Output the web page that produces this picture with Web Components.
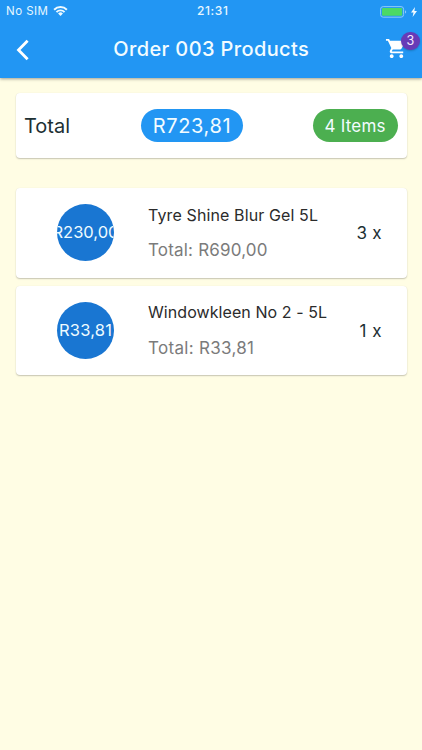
<!DOCTYPE html>
<html lang="en">
<head>
<meta charset="utf-8">
<title>Order 003 Products</title>
<style>
html, body { margin: 0; height: 100%; background: #fffde4; overflow: hidden; }
body { font-family: Inter, "Liberation Sans", sans-serif; }
</style>
</head>
<body>
<order-screen></order-screen>
<script>
class BaseElement extends HTMLElement {
  constructor() {
    super();
    this.attachShadow({ mode: 'open' }).innerHTML = this.render();
  }
  render() { return ''; }
}

/* A single line of text tracked out to a given width. */
class TrackedText extends BaseElement {
  render() {
    return `<style>
      :host { display: block; white-space: pre; flex: none; line-height: 1.2; }
      span { display: inline-block; }
    </style><span></span>`;
  }
  connectedCallback() {
    const span = this.shadowRoot.querySelector('span');
    const text = this.getAttribute('text');
    const width = parseFloat(this.getAttribute('width'));
    span.textContent = text;
    const natural = span.getBoundingClientRect().width;
    span.style.letterSpacing = (width - natural) / (text.length - 1) + 'px';
    this.style.width = width + 'px';
  }
}
customElements.define('tracked-text', TrackedText);

class StatusBar extends BaseElement {
  render() {
    return `<style>
      :host { display: grid; grid-template-columns: 1fr auto 1fr; align-items: center; height: 23px; box-sizing: border-box; padding: 1px 5px 0 6px; color: #e6f6ff; font-size: 11.5px; }
      .left, .right { display: flex; align-items: center; }
      .left { gap: 5px; }
      .left svg { margin-top: -2px; }
      .right { justify-content: flex-end; gap: 4px; margin-top: -1px; }
      .time { font-weight: 500; font-size: 12px; margin: -1px 0 0 2px; }
      svg { display: block; }
    </style>
    <div class="left"><tracked-text text="No SIM" width="42"></tracked-text>
      <svg width="15" height="11.5" viewBox="0 0 16 12" fill="none" stroke="#eefaff" stroke-width="2.1"><path d="M1.2 4.9a9.6 9.6 0 0 1 13.6 0M3.7 7.4a6 6 0 0 1 8.6 0"/><path d="M8 11.6 5.4 9a3.6 3.6 0 0 1 5.2 0z" fill="#eefaff" stroke="none"/></svg>
    </div>
    <tracked-text class="time" text="21:31" width="31"></tracked-text>
    <div class="right">
      <svg width="27" height="12" viewBox="0 0 27 12"><rect x=".6" y=".6" width="23" height="10.6" rx="2.6" fill="none" stroke="#8dcafa"/><rect x="2" y="2" width="20.2" height="7.8" rx="1" fill="#4cd964"/><path d="M25 4.2q1.2.5 1.2 1.7T25 7.6z" fill="#8dcafa"/></svg>
      <svg width="6" height="10" viewBox="0 0 6 10"><path d="M4 0 0 5.6h2.5L1.6 10 6 4H3.4z" fill="#f3fbff"/></svg>
    </div>`;
  }
}
customElements.define('status-bar', StatusBar);

class CartButton extends BaseElement {
  render() {
    return `<style>
      :host { display: block; position: relative; width: 25px; height: 24px; }
      svg { display: block; }
      .badge { position: absolute; left: 16px; top: -5.5px; width: 18.5px; height: 18.5px; border-radius: 50%; background: #673ab7; color: #f5eaff; font-size: 12.5px; display: flex; align-items: center; justify-content: center; line-height: 1; box-shadow: 0 1px 2px rgba(0,0,0,.2); }
    </style>
    <svg width="23" height="23" viewBox="0 0 24 24" fill="#fff"><path d="M7 18c-1.1 0-1.99.9-1.99 2S5.9 22 7 22s2-.9 2-2-.9-2-2-2zM1 2v2h2l3.6 7.59-1.35 2.45c-.16.28-.25.61-.25.96 0 1.1.9 2 2 2h12v-2H7.42c-.14 0-.25-.11-.25-.25l.03-.12.9-1.63h7.45c.75 0 1.41-.41 1.75-1.03l3.58-6.49A1 1 0 0 0 20.01 4H5.21l-.94-2H1zm16 16c-1.1 0-1.99.9-1.99 2s.89 2 1.99 2 2-.9 2-2-.9-2-2-2z"/></svg>
    <div class="badge"><slot></slot></div>`;
  }
}
customElements.define('cart-button', CartButton);

class AppBar extends BaseElement {
  render() {
    return `<style>
      :host { display: block; height: 78px; box-sizing: border-box; background: #2296f3; box-shadow: 0 1px 3px rgba(0,0,0,.38); }
      .bar { display: grid; grid-template-columns: 1fr auto 1fr; align-items: center; height: 53px; padding: 0 12px 0 16px; }
      .title { color: #f3fcff; font-size: 20px; font-weight: 500; margin: -1px 4px 0 0; }
      cart-button { justify-self: end; margin-top: -1px; }
      svg { display: block; }
    </style>
    <status-bar></status-bar>
    <div class="bar">
      <svg width="14" height="22" viewBox="0 0 14 22" fill="none" stroke="#fff" stroke-width="2.8"><path d="M11.6 1.7 2.5 11l9.1 9.3"/></svg>
      <tracked-text class="title" text="Order 003 Products" width="195.5"></tracked-text>
      <cart-button>3</cart-button>
    </div>`;
  }
}
customElements.define('app-bar', AppBar);

class MaterialCard extends BaseElement {
  render() {
    return `<style>
      :host { display: flex; align-items: center; box-sizing: border-box; background: #fff; border-radius: 4px; box-shadow: 0 1px 1.5px rgba(0,0,0,.22), 0 0 1px rgba(0,0,0,.08); }
    </style><slot></slot>`;
  }
}
customElements.define('material-card', MaterialCard);

class ColorChip extends BaseElement {
  render() {
    return `<style>
      :host { display: flex; align-items: center; justify-content: center; box-sizing: border-box; height: 33px; border-radius: 17px; color: #f2fcff; }
    </style><slot></slot>`;
  }
}
customElements.define('color-chip', ColorChip);

class OrderTotal extends BaseElement {
  render() {
    return `<style>
      :host { display: block; }
      material-card { height: 65px; padding: 0 9px 0 8.5px; justify-content: space-between; color: #1d3033; font-size: 20px; }
      .sum { width: 102px; background: #2296f3; margin-left: 1px; }
      .count { width: 85px; background: #4caf50; font-size: 17px; padding-top: 1px; }
    </style>
    <material-card>
      <tracked-text text="Total" width="46"></tracked-text>
      <color-chip class="sum"><tracked-text text="R723,81" width="78"></tracked-text></color-chip>
      <color-chip class="count"><tracked-text text="4 Items" width="61"></tracked-text></color-chip>
    </material-card>`;
  }
}
customElements.define('order-total', OrderTotal);

class OrderItem extends BaseElement {
  render() {
    const a = n => this.getAttribute(n);
    return `<style>
      :host { display: block; }
      material-card { height: 89.5px; padding: 0 25px 0 41.5px; }
      .price { display: flex; align-items: center; justify-content: center; flex: none; box-sizing: border-box; padding-top: 1px; width: 57px; height: 57px; border-radius: 50%; overflow: hidden; background: #1976d2; color: #eefbff; font-size: 16.5px; }
      .info { flex: 1; margin: 1px 0 0 34px; display: flex; flex-direction: column; gap: 15.5px; }
      .name { color: #2b2b2b; font-size: 16px; }
      .total { color: #7b7b7b; font-size: 17px; }
      .qty { color: #1d3033; font-size: 17px; margin-top: 1px; }
    </style>
    <material-card>
      <div class="price"><tracked-text text="${a('price')}" width="${a('price-width')}"></tracked-text></div>
      <div class="info">
        <tracked-text class="name" text="${a('name')}" width="${a('name-width')}"></tracked-text>
        <tracked-text class="total" text="Total: ${a('total')}" width="${a('total-width')}"></tracked-text>
      </div>
      <tracked-text class="qty" text="${a('qty')} x" width="${a('qty-width')}"></tracked-text>
    </material-card>`;
  }
}
customElements.define('order-item', OrderItem);

class OrderScreen extends BaseElement {
  render() {
    return `<style>
      :host { display: block; height: 100vh; background: #fffde4; }
      main { padding: 15px 15.5px 0; }
      .items { margin-top: 30px; display: flex; flex-direction: column; gap: 8px; }
    </style>
    <app-bar></app-bar>
    <main>
      <order-total></order-total>
      <div class="items">
        <order-item price="R230,00" price-width="66" name="Tyre Shine Blur Gel 5L" name-width="170" total="R690,00" total-width="119.5" qty="3" qty-width="25"></order-item>
        <order-item price="R33,81" price-width="53" name="Windowkleen No 2 - 5L" name-width="179" total="R33,81" total-width="106" qty="1" qty-width="22"></order-item>
      </div>
    </main>`;
  }
}
customElements.define('order-screen', OrderScreen);
</script>
</body>
</html>
